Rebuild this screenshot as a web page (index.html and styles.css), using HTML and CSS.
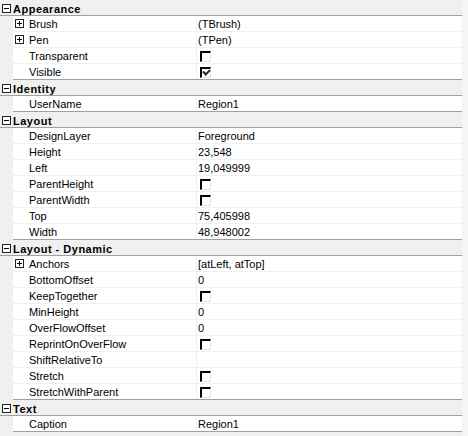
FILE: index.html
```html
<!DOCTYPE html>
<html>
<head>
<meta charset="utf-8">
<link rel="stylesheet" href="styles.css">
</head>
<body>
<div class="inspector">
  <div class="cat"><span class="box minus"></span><span class="cat-title">Appearance</span></div>
  <div class="prop"><div class="name"><span class="box plus"></span>Brush</div><div class="value">(TBrush)</div></div>
  <div class="prop"><div class="name"><span class="box plus"></span>Pen</div><div class="value">(TPen)</div></div>
  <div class="prop"><div class="name">Transparent</div><div class="value"><span class="check"></span></div></div>
  <div class="prop last"><div class="name">Visible</div><div class="value"><span class="check on"></span></div></div>

  <div class="cat"><span class="box minus"></span><span class="cat-title">Identity</span></div>
  <div class="prop last"><div class="name">UserName</div><div class="value">Region1</div></div>

  <div class="cat"><span class="box minus"></span><span class="cat-title">Layout</span></div>
  <div class="prop"><div class="name">DesignLayer</div><div class="value">Foreground</div></div>
  <div class="prop"><div class="name">Height</div><div class="value">23,548</div></div>
  <div class="prop"><div class="name">Left</div><div class="value">19,049999</div></div>
  <div class="prop"><div class="name">ParentHeight</div><div class="value"><span class="check"></span></div></div>
  <div class="prop"><div class="name">ParentWidth</div><div class="value"><span class="check"></span></div></div>
  <div class="prop"><div class="name">Top</div><div class="value">75,405998</div></div>
  <div class="prop last"><div class="name">Width</div><div class="value">48,948002</div></div>

  <div class="cat"><span class="box minus"></span><span class="cat-title">Layout - Dynamic</span></div>
  <div class="prop"><div class="name"><span class="box plus"></span>Anchors</div><div class="value">[atLeft, atTop]</div></div>
  <div class="prop"><div class="name">BottomOffset</div><div class="value">0</div></div>
  <div class="prop"><div class="name">KeepTogether</div><div class="value"><span class="check"></span></div></div>
  <div class="prop"><div class="name">MinHeight</div><div class="value">0</div></div>
  <div class="prop"><div class="name">OverFlowOffset</div><div class="value">0</div></div>
  <div class="prop"><div class="name">ReprintOnOverFlow</div><div class="value"><span class="check"></span></div></div>
  <div class="prop"><div class="name">ShiftRelativeTo</div><div class="value"></div></div>
  <div class="prop"><div class="name">Stretch</div><div class="value"><span class="check"></span></div></div>
  <div class="prop last"><div class="name">StretchWithParent</div><div class="value"><span class="check"></span></div></div>

  <div class="cat"><span class="box minus"></span><span class="cat-title">Text</span></div>
  <div class="prop last"><div class="name">Caption</div><div class="value">Region1</div></div>
</div>
</body>
</html>
```
FILE: styles.css
```css
html, body {
  margin: 0;
  padding: 0;
  background: #f5f5f5;
}
body {
  font-family: "Liberation Sans", Arial, sans-serif;
  font-size: 11px;
  color: #000;
}
.inspector {
  width: 462px;
  height: 436px;
  background: #f0f0f0;
  display: flex;
  flex-direction: column;
}
.cat {
  height: 16px;
  box-sizing: border-box;
  border-bottom: 1px solid #a0a0a0;
  display: flex;
  align-items: flex-start;
  background: #f0f0f0;
}
.cat-title {
  font-weight: bold;
  letter-spacing: 0.5px;
  margin-left: 2px;
  padding-top: 2px;
  line-height: 15px;
}
.box {
  width: 9px;
  height: 9px;
  box-sizing: border-box;
  border: 1px solid #222;
  background: #fff;
  position: relative;
  flex: none;
}
.cat .box {
  margin-left: 2px;
  margin-top: 4px;
}
.box::before {
  content: "";
  position: absolute;
  left: 1px;
  top: 3px;
  width: 5px;
  height: 1px;
  background: #000;
}
.box.plus::after {
  content: "";
  position: absolute;
  left: 3px;
  top: 1px;
  width: 1px;
  height: 5px;
  background: #000;
}
.prop {
  height: 16px;
  box-sizing: border-box;
  margin-left: 13px;
  background: #fff;
  border-bottom: 1px solid #f0f0f0;
  display: flex;
}
.prop.last {
  border-bottom-color: #a0a0a0;
}
.name {
  width: 184px;
  box-sizing: border-box;
  border-right: 1px solid #f0f0f0;
  padding-left: 16px;
  padding-top: 2px;
  line-height: 13px;
  position: relative;
  white-space: nowrap;
}
.name .box {
  position: absolute;
  left: 2px;
  top: 3px;
}
.value {
  flex: 1;
  padding-left: 1px;
  padding-top: 2px;
  line-height: 13px;
  white-space: nowrap;
  display: flex;
  align-items: flex-start;
}
.check {
  display: block;
  width: 11px;
  height: 11px;
  box-sizing: border-box;
  margin-left: 2px;
  margin-top: 1px;
  border-top: 2px solid #000;
  border-left: 2px solid #000;
  border-right: 1px solid #e3e3e3;
  border-bottom: 1px solid #e3e3e3;
  background: #fff;
  position: relative;
}
.check.on::after {
  content: "";
  position: absolute;
  left: 1px;
  top: 0px;
  width: 5px;
  height: 3px;
  border-left: 2px solid #222;
  border-bottom: 2px solid #222;
  transform: rotate(-45deg);
}
```
